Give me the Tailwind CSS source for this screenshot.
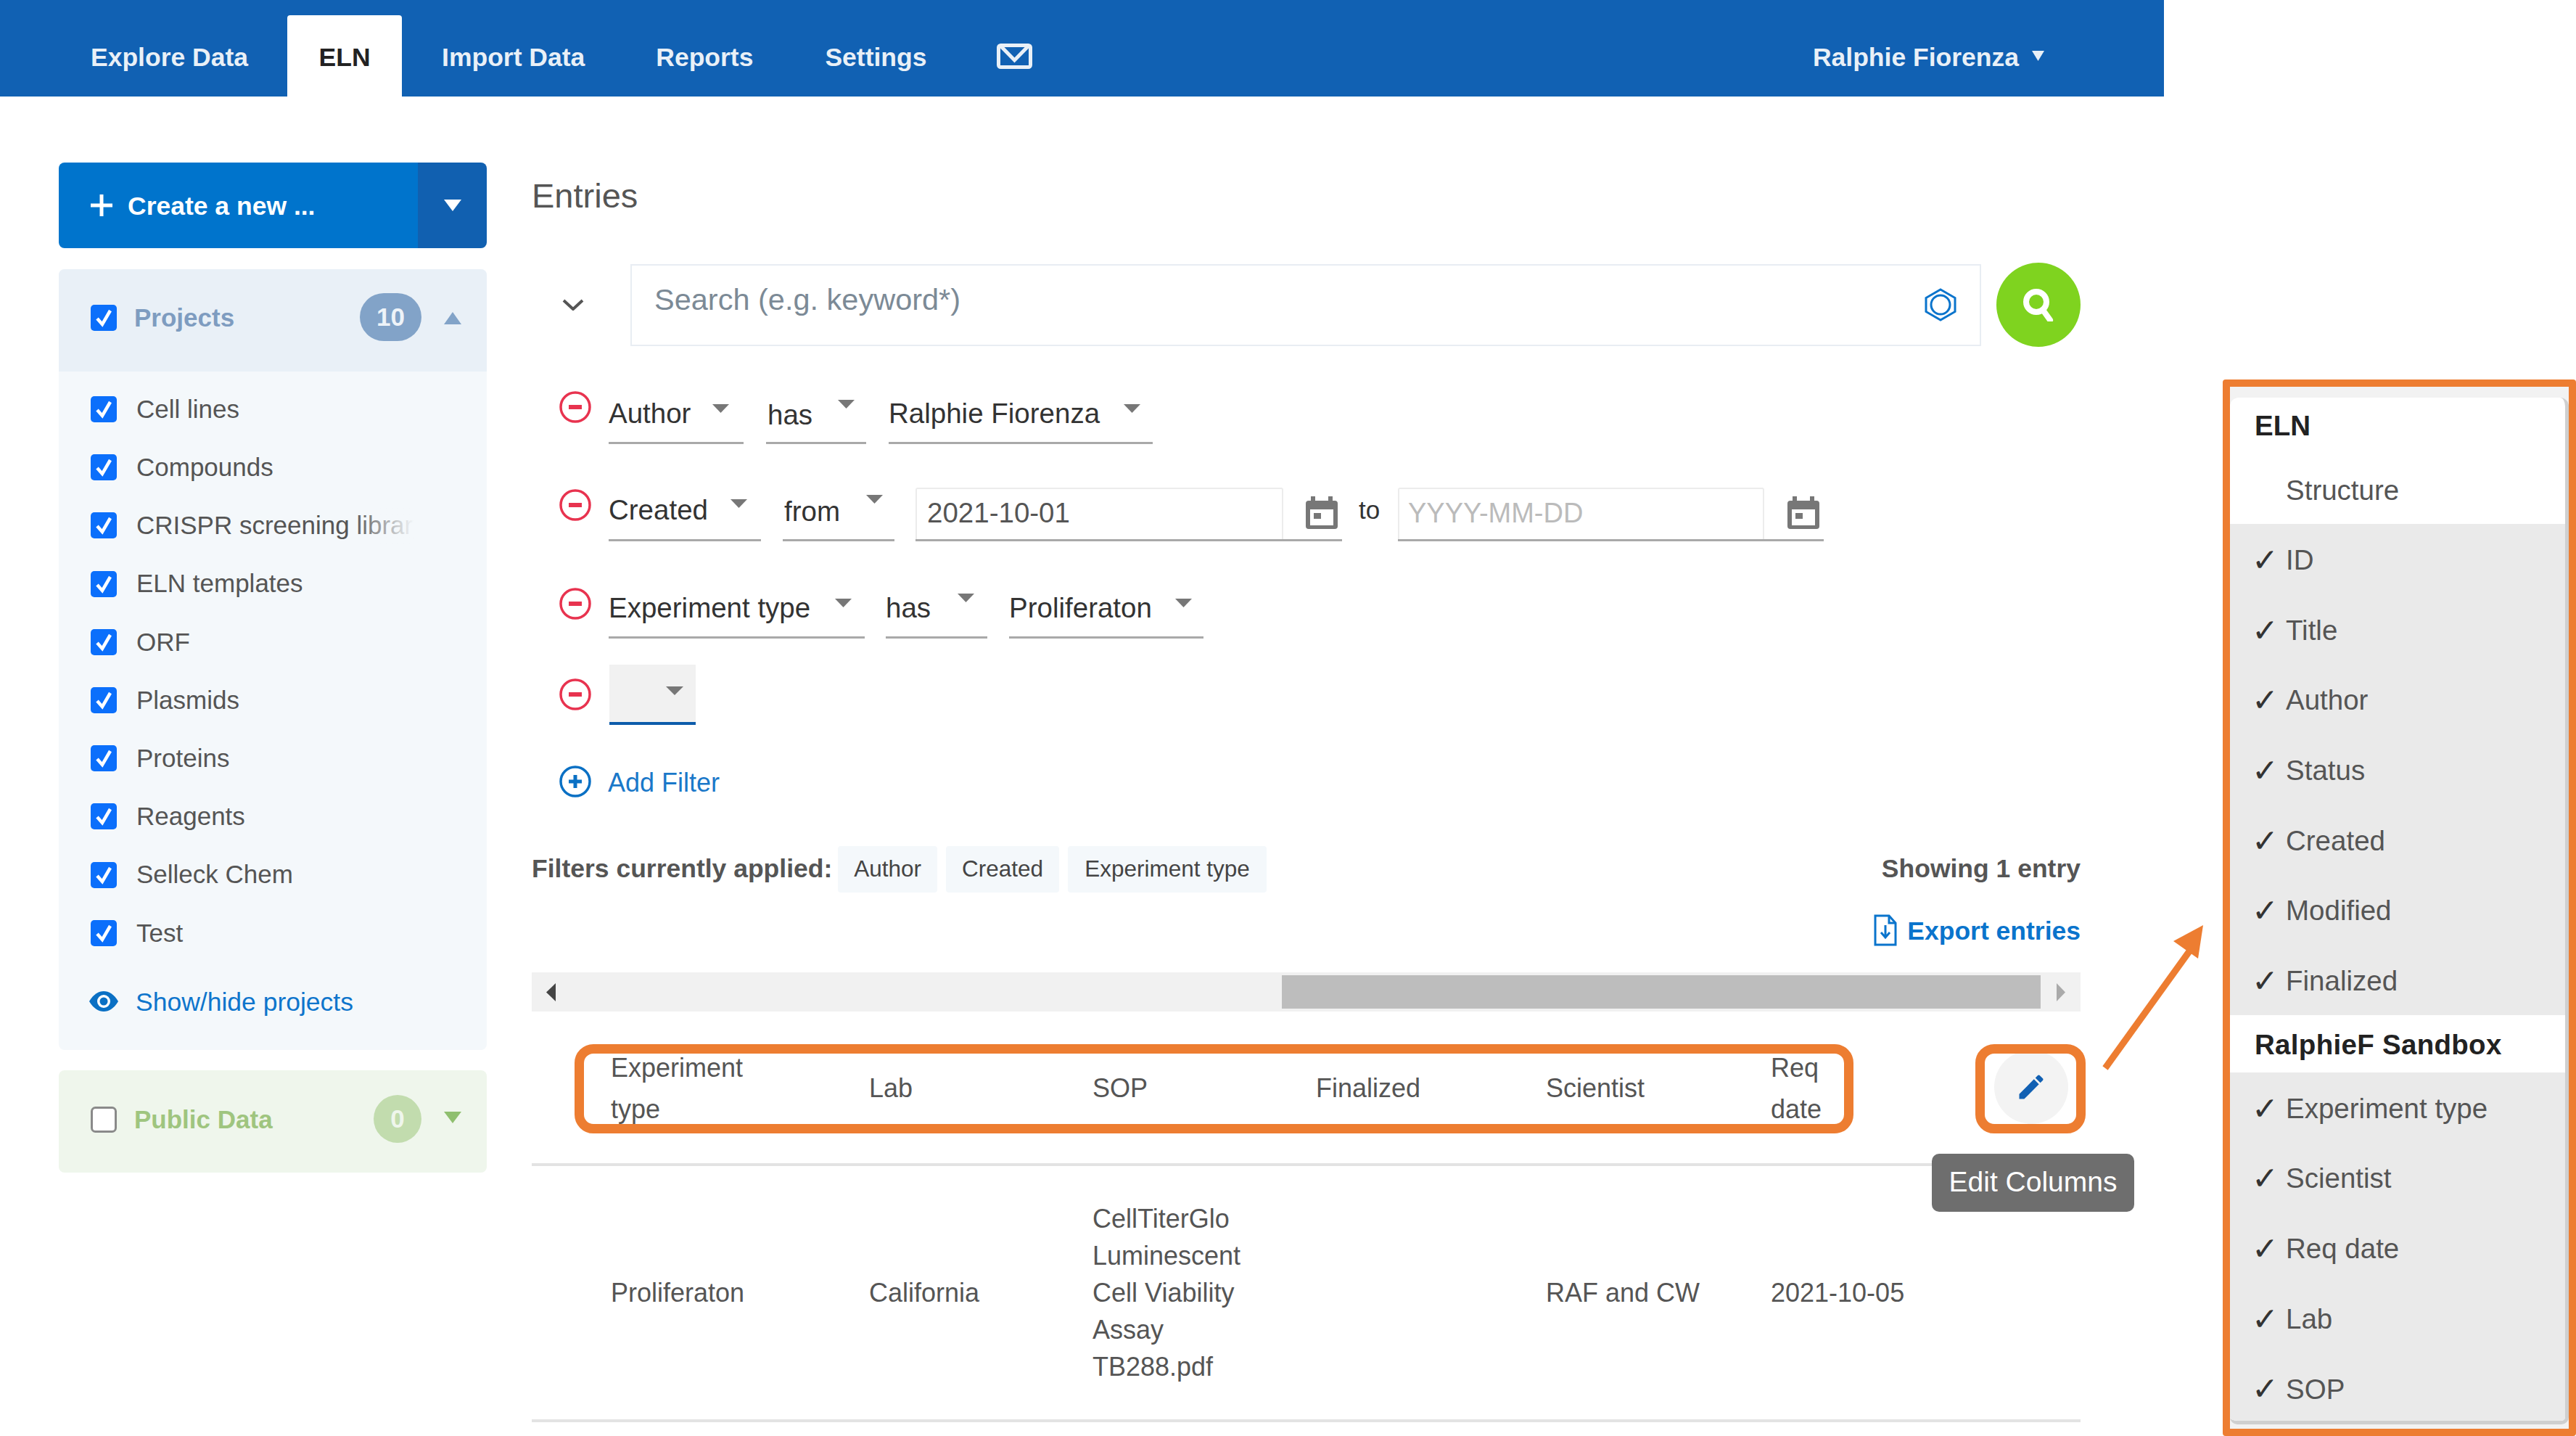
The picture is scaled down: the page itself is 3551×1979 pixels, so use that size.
<!DOCTYPE html>
<html>
  <head>
    <meta charset="UTF-8" />
    <title>ELN Entries</title>
    <script src="https://cdn.jsdelivr.net/npm/@tailwindcss/browser@4"></script>
  </head>
  <body class="bg-white font-['Liberation_Sans',sans-serif] text-[#555]">
    <div class="relative w-[3551px] h-[1979px] overflow-hidden">

      <!-- top nav -->
      <header class="flex w-[2983px] h-[133px] bg-[#1161b3] pl-[125px] text-[35.5px] font-bold text-[#e9f0f7]">
        <a class="leading-[158px]">Explore Data</a>
        <a class="ml-[54px] mt-[21px] h-[112px] w-[158px] rounded-t-[4px] bg-white text-center leading-[116px] text-[#222]">ELN</a>
        <a class="ml-[55px] leading-[158px]">Import Data</a>
        <a class="ml-[98px] leading-[158px]">Reports</a>
        <a class="ml-[99px] leading-[158px]">Settings</a>
        <svg class="ml-[97px] mt-[60px]" width="49" height="35" viewBox="0 0 49 35"><rect x="2.5" y="2.5" width="44" height="30" rx="3" fill="none" stroke="#e9f0f7" stroke-width="5"/><path d="M5 3l19.500 20L44 3" fill="none" stroke="#e9f0f7" stroke-width="5"/></svg>
        <a class="ml-auto leading-[158px]">Ralphie Fiorenza</a>
        <svg class="ml-[18px] mr-[165px] mt-[70px]" width="17" height="14" viewBox="0 0 17 14"><path d="M0 0h17L8.500 14z" fill="#e9f0f7"/></svg>
      </header>

      <div class="flex pl-[81px] pt-[91px]">
        <!-- sidebar -->
        <aside class="w-[590px] shrink-0">
          <div class="flex h-[118px] overflow-hidden rounded-[8px] text-white">
            <div class="flex flex-1 items-center bg-[#0074cc] pl-[44px] text-[35.500px] font-bold">
              <svg width="30" height="30" viewBox="0 0 30 30"><path d="M15 0v30M0 15h30" stroke="#fff" stroke-width="5"/></svg>
              <span class="ml-[21px] mt-[3px]">Create a new ...</span>
            </div>
            <div class="flex w-[95px] items-center justify-center bg-[#1160b0]">
              <svg width="24" height="16" viewBox="0 0 24 16"><path d="M0 0h24L12 16z" fill="#fff"/></svg>
            </div>
          </div>

          <div class="mt-[29px] overflow-hidden rounded-[8px] bg-[#f4f8fb]">
            <div class="flex h-[141px] items-start bg-[#e9f0f7] pl-[44px] pt-[33px]">
              <svg class="mt-[16px]" width="36" height="36" viewBox="0 0 36 36"><rect width="36" height="36" rx="5" fill="#0b6ffb"/><path d="M9 19l7 8L27 8" fill="none" stroke="#fff" stroke-width="4.500"/></svg>
              <span class="ml-[24px] mt-[16px] text-[35px] font-bold leading-[36px] text-[#7e9cc0]">Projects</span>
              <span class="ml-auto flex h-[66px] w-[85px] items-center justify-center rounded-full bg-[#82a3c8] text-[35px] font-bold text-[#eef3f8]">10</span>
              <svg class="ml-[31px] mr-[35px] mt-[26px]" width="24" height="17" viewBox="0 0 24 17"><path d="M0 17h24L12 0z" fill="#82a3c8"/></svg>
            </div>
            <ul class="pb-[27px] pl-[44px] pt-[12px] text-[35px]">
              <li class="flex h-[80.200px] items-center gap-[27px]"><svg width="36" height="36" viewBox="0 0 36 36"><rect width="36" height="36" rx="5" fill="#0b6ffb"/><path d="M9 19l7 8L27 8" fill="none" stroke="#fff" stroke-width="4.500"/></svg>Cell lines</li>
              <li class="flex h-[80.200px] items-center gap-[27px]"><svg width="36" height="36" viewBox="0 0 36 36"><rect width="36" height="36" rx="5" fill="#0b6ffb"/><path d="M9 19l7 8L27 8" fill="none" stroke="#fff" stroke-width="4.500"/></svg>Compounds</li>
              <li class="flex h-[80.200px] items-center gap-[27px]"><svg width="36" height="36" viewBox="0 0 36 36"><rect width="36" height="36" rx="5" fill="#0b6ffb"/><path d="M9 19l7 8L27 8" fill="none" stroke="#fff" stroke-width="4.500"/></svg>
                <span class="relative w-[383px] overflow-hidden whitespace-nowrap">CRISPR screening library<span class="absolute right-0 top-0 h-full w-[85px] bg-linear-to-r from-[#f4f8fb]/0 to-[#f4f8fb]"></span></span>
              </li>
              <li class="flex h-[80.200px] items-center gap-[27px]"><svg width="36" height="36" viewBox="0 0 36 36"><rect width="36" height="36" rx="5" fill="#0b6ffb"/><path d="M9 19l7 8L27 8" fill="none" stroke="#fff" stroke-width="4.500"/></svg>ELN templates</li>
              <li class="flex h-[80.200px] items-center gap-[27px]"><svg width="36" height="36" viewBox="0 0 36 36"><rect width="36" height="36" rx="5" fill="#0b6ffb"/><path d="M9 19l7 8L27 8" fill="none" stroke="#fff" stroke-width="4.500"/></svg>ORF</li>
              <li class="flex h-[80.200px] items-center gap-[27px]"><svg width="36" height="36" viewBox="0 0 36 36"><rect width="36" height="36" rx="5" fill="#0b6ffb"/><path d="M9 19l7 8L27 8" fill="none" stroke="#fff" stroke-width="4.500"/></svg>Plasmids</li>
              <li class="flex h-[80.200px] items-center gap-[27px]"><svg width="36" height="36" viewBox="0 0 36 36"><rect width="36" height="36" rx="5" fill="#0b6ffb"/><path d="M9 19l7 8L27 8" fill="none" stroke="#fff" stroke-width="4.500"/></svg>Proteins</li>
              <li class="flex h-[80.200px] items-center gap-[27px]"><svg width="36" height="36" viewBox="0 0 36 36"><rect width="36" height="36" rx="5" fill="#0b6ffb"/><path d="M9 19l7 8L27 8" fill="none" stroke="#fff" stroke-width="4.500"/></svg>Reagents</li>
              <li class="flex h-[80.200px] items-center gap-[27px]"><svg width="36" height="36" viewBox="0 0 36 36"><rect width="36" height="36" rx="5" fill="#0b6ffb"/><path d="M9 19l7 8L27 8" fill="none" stroke="#fff" stroke-width="4.500"/></svg>Selleck Chem</li>
              <li class="flex h-[80.200px] items-center gap-[27px]"><svg width="36" height="36" viewBox="0 0 36 36"><rect width="36" height="36" rx="5" fill="#0b6ffb"/><path d="M9 19l7 8L27 8" fill="none" stroke="#fff" stroke-width="4.500"/></svg>Test</li>
              <li class="-ml-[2px] mt-[14px] flex h-[80px] items-center gap-[24px] text-[35.500px] text-[#0e75cc]">
                <svg width="40" height="28" viewBox="0 0 40 28"><path d="M0 14C6 4 13 0 20 0s14 4 20 14c-6 10-13 14-20 14S6 24 0 14z" fill="#0a70c4"/><circle cx="20" cy="14" r="9" fill="#fff"/><circle cx="20" cy="14" r="5.500" fill="#0a70c4"/></svg>
                <span class="mt-[3px]">Show/hide projects</span>
              </li>
            </ul>
          </div>

          <div class="mt-[28px] flex h-[141px] items-start rounded-[8px] bg-[#eff6ec] pl-[44px] pt-[34px]">
            <svg class="mt-[16px]" width="36" height="36" viewBox="0 0 36 36"><rect x="1.500" y="1.500" width="33" height="33" rx="5" fill="#fff" stroke="#8a8a8a" stroke-width="3"/></svg>
            <span class="ml-[24px] mt-[16px] text-[35px] font-bold leading-[36px] text-[#9fc57f]">Public Data</span>
            <span class="ml-auto flex h-[66px] w-[66px] items-center justify-center rounded-full bg-[#c2dcae] text-[35px] font-bold text-[#eff6ec]">0</span>
            <svg class="ml-[31px] mr-[35px] mt-[23px]" width="24" height="16" viewBox="0 0 24 16"><path d="M0 0h24L12 16z" fill="#8fbf6f"/></svg>
          </div>
        </aside>

        <!-- main column -->
        <main class="ml-[62px] w-[2135px] shrink-0">
          <h1 class="text-[47px] leading-[92px]">Entries</h1>

          <div class="mt-[46px] flex items-center">
            <svg class="ml-[42px]" width="30" height="16" viewBox="0 0 30 16"><path d="M2 2l13 12L28 2" fill="none" stroke="#555" stroke-width="4"/></svg>
            <div class="ml-[64px] flex h-[113px] w-[1862px] items-center justify-between border-2 border-[#e8edf3] pb-[14px] pl-[31px] pr-[32px]">
              <span class="text-[41.500px] text-[#7c8a96]">Search (e.g. keyword*)</span>
              <svg class="mt-[14px]" width="44" height="46" viewBox="0 0 44 46"><path d="M22 2l20 11.500v19L22 44 2 32.500v-19z" fill="none" stroke="#0a74cc" stroke-width="3"/><circle cx="22" cy="23" r="13" fill="none" stroke="#0a74cc" stroke-width="3"/></svg>
            </div>
            <div class="ml-[21px] flex h-[116px] w-[116px] items-center justify-center rounded-full bg-[#7fd31f]">
              <svg width="44" height="46" viewBox="0 0 44 46"><circle cx="19" cy="19" r="14" fill="none" stroke="#fff" stroke-width="8"/><path d="M28 30l10 14" stroke="#fff" stroke-width="8" stroke-linecap="round"/></svg>
            </div>
          </div>

          <!-- filters -->
          <div class="mt-[59px] flex h-[75px] items-start pl-[38px] text-[38.500px] text-[#333]">
            <svg class="mt-[2px]" width="44" height="44" viewBox="0 0 44 44"><circle cx="22" cy="22" r="20" fill="none" stroke="#e8334f" stroke-width="3.500"/><path d="M13 22h18" stroke="#e8334f" stroke-width="6"/></svg>
            <div class="ml-[24px] flex h-[75px] w-[186px] items-start border-b-[3px] border-[#a9a9a9] leading-[66px]">Author<svg class="ml-[30px] mt-[20px]" width="23" height="12" viewBox="0 0 23 12"><path d="M0 0h23L11.500 12z" fill="#777"/></svg></div>
            <div class="ml-[31px] flex h-[75px] w-[138px] items-start border-b-[3px] border-[#a9a9a9] pl-[2px] leading-[70px]">has<svg class="ml-[35px] mt-[14px]" width="23" height="12" viewBox="0 0 23 12"><path d="M0 0h23L11.500 12z" fill="#777"/></svg></div>
            <div class="ml-[31px] flex h-[75px] w-[364px] items-start border-b-[3px] border-[#a9a9a9] leading-[66px]">Ralphie Fiorenza<svg class="ml-[33px] mt-[20px]" width="23" height="12" viewBox="0 0 23 12"><path d="M0 0h23L11.500 12z" fill="#777"/></svg></div>
          </div>

          <div class="mt-[58px] flex h-[76px] items-start pl-[38px] text-[38.500px] text-[#333]">
            <svg class="mt-[4px]" width="44" height="44" viewBox="0 0 44 44"><circle cx="22" cy="22" r="20" fill="none" stroke="#e8334f" stroke-width="3.500"/><path d="M13 22h18" stroke="#e8334f" stroke-width="6"/></svg>
            <div class="ml-[24px] flex h-[76px] w-[210px] items-start border-b-[3px] border-[#a9a9a9] leading-[66px]">Created<svg class="ml-[31px] mt-[18px]" width="23" height="12" viewBox="0 0 23 12"><path d="M0 0h23L11.500 12z" fill="#777"/></svg></div>
            <div class="ml-[30px] flex h-[76px] w-[154px] items-start border-b-[3px] border-[#a9a9a9] pl-[2px] leading-[70px]">from<svg class="ml-[36px] mt-[12px]" width="23" height="12" viewBox="0 0 23 12"><path d="M0 0h23L11.500 12z" fill="#777"/></svg></div>
            <div class="ml-[29px] flex h-[76px] w-[588px] items-start border-b-[3px] border-[#a9a9a9]">
              <div class="mt-[2px] h-[71px] w-[507px] rounded-t-[3px] border-x-2 border-t-2 border-[#ececec] pl-[14px] leading-[66px] text-[#555]">2021-10-01</div>
              <svg class="ml-[29px] mt-[14px]" width="48" height="47" viewBox="0 0 48 47"><path d="M12 0v8M36 0v8" stroke="#777" stroke-width="6"/><rect x="2" y="6" width="44" height="39" rx="4" fill="#777"/><rect x="8" y="18" width="32" height="22" fill="#fff"/><rect x="13" y="23" width="10" height="8" fill="#777"/></svg>
            </div>
            <span class="ml-[23px] w-[29px] text-[35px] leading-[66px]">to</span>
            <div class="ml-[25px] flex h-[76px] w-[587px] items-start border-b-[3px] border-[#a9a9a9]">
              <div class="mt-[2px] h-[71px] w-[505px] rounded-t-[3px] border-x-2 border-t-2 border-[#ececec] pl-[12px] text-[38px] leading-[66px] text-[#bbb]">YYYY-MM-DD</div>
              <svg class="ml-[30px] mt-[14px]" width="48" height="47" viewBox="0 0 48 47"><path d="M12 0v8M36 0v8" stroke="#777" stroke-width="6"/><rect x="2" y="6" width="44" height="39" rx="4" fill="#777"/><rect x="8" y="18" width="32" height="22" fill="#fff"/><rect x="13" y="23" width="10" height="8" fill="#777"/></svg>
            </div>
          </div>

          <div class="mt-[58px] flex h-[76px] items-start pl-[38px] text-[38.500px] text-[#333]">
            <svg class="mt-[6px]" width="44" height="44" viewBox="0 0 44 44"><circle cx="22" cy="22" r="20" fill="none" stroke="#e8334f" stroke-width="3.500"/><path d="M13 22h18" stroke="#e8334f" stroke-width="6"/></svg>
            <div class="ml-[24px] flex h-[76px] w-[353px] items-start border-b-[3px] border-[#a9a9a9] leading-[68px]">Experiment type<svg class="ml-[34px] mt-[21px]" width="23" height="12" viewBox="0 0 23 12"><path d="M0 0h23L11.500 12z" fill="#777"/></svg></div>
            <div class="ml-[29px] flex h-[76px] w-[140px] items-start border-b-[3px] border-[#a9a9a9] leading-[68px]">has<svg class="ml-[37px] mt-[14px]" width="23" height="12" viewBox="0 0 23 12"><path d="M0 0h23L11.500 12z" fill="#777"/></svg></div>
            <div class="ml-[30px] flex h-[76px] w-[268px] items-start border-b-[3px] border-[#a9a9a9] leading-[68px]">Proliferaton<svg class="ml-[32px] mt-[21px]" width="23" height="12" viewBox="0 0 23 12"><path d="M0 0h23L11.500 12z" fill="#777"/></svg></div>
          </div>

          <div class="mt-[36px] flex h-[83px] items-start pl-[38px]">
            <svg class="mt-[19px]" width="44" height="44" viewBox="0 0 44 44"><circle cx="22" cy="22" r="20" fill="none" stroke="#e8334f" stroke-width="3.500"/><path d="M13 22h18" stroke="#e8334f" stroke-width="6"/></svg>
            <div class="ml-[25px] flex h-[83px] w-[119px] justify-end border-b-4 border-[#0d5cab] bg-[#f1f1f1] pr-[17px] pt-[30px]"><svg width="24" height="12" viewBox="0 0 24 12"><path d="M0 0h24L12 12z" fill="#777"/></svg></div>
          </div>

          <div class="mt-[56px] flex h-[44px] items-center pl-[38px] text-[36px] text-[#1a78c9]">
            <svg width="44" height="44" viewBox="0 0 44 44"><circle cx="22" cy="22" r="20" fill="none" stroke="#0a70c4" stroke-width="3.500"/><path d="M13 22h18M22 13v18" stroke="#0a70c4" stroke-width="5"/></svg>
            <span class="ml-[23px] mt-[3px]">Add Filter</span>
          </div>

          <div class="mt-[67px] flex h-[64px] items-center">
            <span class="text-[35.500px] font-bold">Filters currently applied:</span>
            <span class="ml-[8px] flex h-[64px] items-center rounded-[4px] bg-[#f4f8fb] px-[22px] text-[31.500px] text-[#444]">Author</span>
            <span class="ml-[12px] flex h-[64px] items-center rounded-[4px] bg-[#f4f8fb] px-[22px] text-[31.500px] text-[#444]">Created</span>
            <span class="ml-[12px] flex h-[64px] items-center rounded-[4px] bg-[#f4f8fb] px-[23px] text-[31.500px] text-[#444]">Experiment type</span>
            <span class="ml-auto text-[35.500px] font-bold">Showing 1 entry</span>
          </div>

          <div class="mt-[30px] flex h-[44px] items-center justify-end text-[35.500px] font-bold text-[#0a74cc]">
            <svg width="32" height="44" viewBox="0 0 32 44"><path d="M2 2h19l9 10v30H2z" fill="#fff" stroke="#0a74cc" stroke-width="3"/><path d="M21 2v10h9" fill="none" stroke="#0a74cc" stroke-width="3"/><path d="M16 15v16M10 25l6 7 6-7" fill="none" stroke="#0a74cc" stroke-width="3"/></svg>
            <span class="ml-[14px] mt-[3px]">Export entries</span>
          </div>

          <!-- horizontal scrollbar -->
          <div class="mt-[36px] flex h-[54px] items-center bg-[#f1f1f1]">
            <svg class="ml-[20px]" width="13" height="25" viewBox="0 0 13 25"><path d="M13 0v25L0 12.500z" fill="#444"/></svg>
            <div class="ml-[1001px] h-[46px] w-[1046px] bg-[#bdbdbd]"></div>
            <svg class="ml-[22px]" width="12" height="25" viewBox="0 0 12 25"><path d="M0 0v25l12-12.500z" fill="#aaa"/></svg>
          </div>

          <!-- entries table -->
          <div class="grid h-[213px] grid-cols-[465px_308px_308px_317px_310px_427px] items-center border-b-4 border-[#e3e3e3] pt-[2px] text-[36px] leading-[57px]">
            <div class="pl-[109px]">Experiment<br />type</div>
            <div>Lab</div>
            <div>SOP</div>
            <div>Finalized</div>
            <div>Scientist</div>
            <div class="flex items-center">
              <span>Req<br />date</span>
              <span class="-mt-[4px] ml-[238px] flex h-[102px] w-[102px] items-center justify-center rounded-full bg-[#f3f3f3]">
                <svg width="44" height="44" viewBox="0 0 24 24"><path fill="#1160b3" d="M3 17.250V21h3.750L17.810 9.940l-3.750-3.750L3 17.250zM20.710 7.040c.39-.39.39-1.020 0-1.410l-2.340-2.340c-.39-.39-1.020-.39-1.410 0l-1.830 1.830 3.750 3.750 1.830-1.830z"/></svg>
              </span>
            </div>
          </div>
          <div class="grid h-[353px] grid-cols-[465px_308px_308px_317px_310px_427px] items-center border-b-4 border-[#e3e3e3] text-[36px] leading-[51px]">
            <div class="pl-[109px]">Proliferaton</div>
            <div>California</div>
            <div>CellTiterGlo<br />Luminescent<br />Cell Viability<br />Assay<br />TB288.pdf</div>
            <div></div>
            <div>RAF and CW</div>
            <div>2021-10-05</div>
          </div>
        </main>
      </div>

      <!-- annotations laid over the screenshot -->
      <div class="absolute left-[792px] top-[1439px] h-[123px] w-[1763px] rounded-[26px] border-[13px] border-[#ed7d31]"></div>
      <div class="absolute left-[2723px] top-[1439px] h-[123px] w-[152px] rounded-[26px] border-[13px] border-[#ed7d31]"></div>

      <div class="absolute left-[2663px] top-[1590px] flex h-[80px] w-[279px] items-center justify-center rounded-[10px] bg-[#6e6e6e] pb-[2px] text-[39px] text-white">Edit Columns</div>

      <svg class="absolute left-[2890px] top-[1265px]" width="160" height="220" viewBox="0 0 160 220"><path d="M12 207L128 46" stroke="#ed7d31" stroke-width="9"/><path d="M147 10l-41 22 34 24z" fill="#ed7d31"/></svg>

      <!-- column picker -->
      <div class="absolute left-[3064px] top-[523px] h-[1456px] w-[487px] rounded-[4px] border-[10px] border-[#ed7d31] bg-[#f2f2f2] text-[38.500px]">
        <div class="mt-[15px] h-[1415px] overflow-hidden rounded-t-[12px] rounded-b-[10px] border-r-[5px] border-b-[5px] border-[#cfcfcf] bg-white">
          <div class="h-[76px] pl-[34px] font-bold leading-[78px] text-[#222]">ELN</div>
          <div class="h-[98px] pl-[77px] leading-[104px]">Structure</div>
          <ul class="bg-[#eaeaea]">
            <li class="flex h-[96.700px] items-center pl-[30px] pt-[3px]"><span class="w-[47px] font-['DejaVu_Sans',sans-serif] text-[44px] leading-[52px] text-[#333]">✓</span>ID</li>
            <li class="flex h-[96.700px] items-center pl-[30px] pt-[3px]"><span class="w-[47px] font-['DejaVu_Sans',sans-serif] text-[44px] leading-[52px] text-[#333]">✓</span>Title</li>
            <li class="flex h-[96.700px] items-center pl-[30px] pt-[3px]"><span class="w-[47px] font-['DejaVu_Sans',sans-serif] text-[44px] leading-[52px] text-[#333]">✓</span>Author</li>
            <li class="flex h-[96.700px] items-center pl-[30px] pt-[3px]"><span class="w-[47px] font-['DejaVu_Sans',sans-serif] text-[44px] leading-[52px] text-[#333]">✓</span>Status</li>
            <li class="flex h-[96.700px] items-center pl-[30px] pt-[3px]"><span class="w-[47px] font-['DejaVu_Sans',sans-serif] text-[44px] leading-[52px] text-[#333]">✓</span>Created</li>
            <li class="flex h-[96.700px] items-center pl-[30px] pt-[3px]"><span class="w-[47px] font-['DejaVu_Sans',sans-serif] text-[44px] leading-[52px] text-[#333]">✓</span>Modified</li>
            <li class="flex h-[96.700px] items-center pl-[30px] pt-[3px]"><span class="w-[47px] font-['DejaVu_Sans',sans-serif] text-[44px] leading-[52px] text-[#333]">✓</span>Finalized</li>
          </ul>
          <div class="h-[79px] pl-[34px] font-bold leading-[81px] tracking-[0.3px] text-[#222]">RalphieF Sandbox</div>
          <ul class="bg-[#eaeaea]">
            <li class="flex h-[96.700px] items-center pl-[30px] pt-[3px]"><span class="w-[47px] font-['DejaVu_Sans',sans-serif] text-[44px] leading-[52px] text-[#333]">✓</span>Experiment type</li>
            <li class="flex h-[96.700px] items-center pl-[30px] pt-[3px]"><span class="w-[47px] font-['DejaVu_Sans',sans-serif] text-[44px] leading-[52px] text-[#333]">✓</span>Scientist</li>
            <li class="flex h-[96.700px] items-center pl-[30px] pt-[3px]"><span class="w-[47px] font-['DejaVu_Sans',sans-serif] text-[44px] leading-[52px] text-[#333]">✓</span>Req date</li>
            <li class="flex h-[96.700px] items-center pl-[30px] pt-[3px]"><span class="w-[47px] font-['DejaVu_Sans',sans-serif] text-[44px] leading-[52px] text-[#333]">✓</span>Lab</li>
            <li class="flex h-[96.700px] items-center pl-[30px] pt-[3px]"><span class="w-[47px] font-['DejaVu_Sans',sans-serif] text-[44px] leading-[52px] text-[#333]">✓</span>SOP</li>
          </ul>
        </div>
      </div>
    </div>
  </body>
</html>
